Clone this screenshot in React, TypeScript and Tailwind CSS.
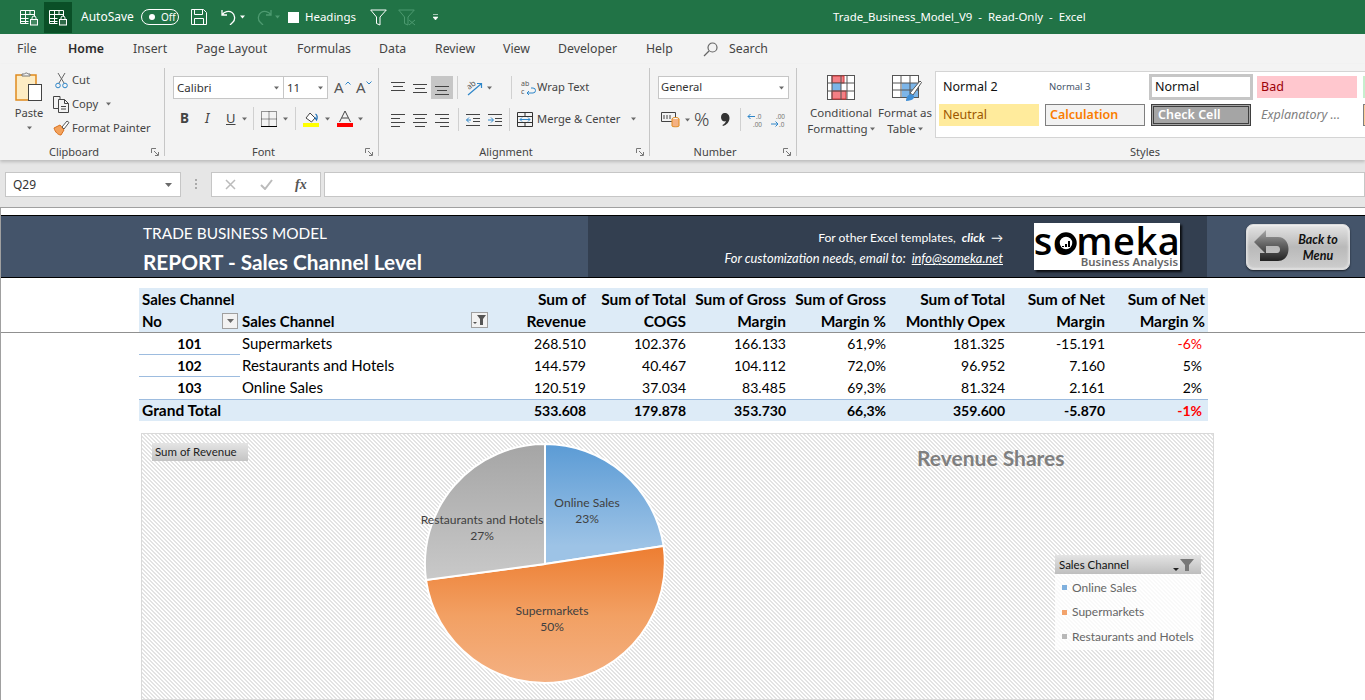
import React from "react";

const Caret = ({ c = "#6a6a6a", className = "" }: { c?: string; className?: string }) => (
  <svg width="7" height="4" viewBox="0 0 7 4" className={"shrink-0 " + className}><path d="M0 0h7L3.500 4z" fill={c} /></svg>
);

const TableLock = () => (
  <svg width="18" height="17" viewBox="0 0 18 17" fill="none" stroke="#fff" strokeWidth="1">
    <path d="M.5 1.500h14M.5 1.500v13h8M.5 5.500h14M.5 9.500h8M.5 12.500h8M5.500 1.500v13M10 1.500v4M14.500 1.500v6" />
    <rect x="10.500" y="10.500" width="7" height="5.500" fill="#fff" fillOpacity=".15" />
    <path d="M12 10.500V9a2 2 0 0 1 4 0v1.500" />
  </svg>
);

const Launcher = () => (
  <svg width="8" height="8" viewBox="0 0 8 8" fill="none" stroke="#777" className="absolute right-[5px] bottom-[4px]">
    <path d="M.5 5V.5H5" /><path d="M3 3l4 4M4 7.500h3.500V4" />
  </svg>
);

const Group = ({ w, label, children }: { w: string; label: string; children: React.ReactNode }) => (
  <div className={"relative flex h-[96px] shrink-0 flex-col " + w}>
    <div className="flex-1">{children}</div>
    <div className="h-[16px] pr-[16px] text-center text-[11px] leading-[16px] text-[#444]">{label}</div>
    <Launcher />
  </div>
);

const Sep = () => <div className="mt-[4px] h-[88px] w-px shrink-0 bg-[#c6c6c6]" />;
const MiniSep = ({ m = "" }: { m?: string }) => <div className={"h-[23px] w-px shrink-0 bg-[#d0d0d0] " + m} />;

const Lines = ({ rows, className = "" }: { rows: [number, number, number][]; className?: string }) => (
  <svg width="14" height="15" viewBox="0 0 14 15" stroke="#444" className={"shrink-0 " + className}>
    {rows.map((r, i) => <path key={i} d={`M${r[0]} ${r[2] + 0.5}h${r[1]}`} />)}
  </svg>
);

const Gallery = ({ className, children }: { className: string; children: React.ReactNode }) => (
  <div className={"flex h-[22px] w-[100px] shrink-0 items-center pl-[4px] " + className}>{children}</div>
);

const head = ["Sum of|Revenue", "Sum of Total|COGS", "Sum of Gross|Margin", "Sum of Gross|Margin %", "Sum of Total|Monthly Opex", "Sum of Net|Margin", "Sum of Net|Margin %"];
const rows = [
  ["101", "Supermarkets", "268.510", "102.376", "166.133", "61,9%", "181.325", "-15.191", "-6%"],
  ["102", "Restaurants and Hotels", "144.579", "40.467", "104.112", "72,0%", "96.952", "7.160", "5%"],
  ["103", "Online Sales", "120.519", "37.034", "83.485", "69,3%", "81.324", "2.161", "2%"],
];
const totals = ["533.608", "179.878", "353.730", "66,3%", "359.600", "-5.870", "-1%"];
const gridCols = "grid w-[1069px] grid-cols-[101px_249px_100px_100px_100px_100px_119px_100px_100px]";

export default function App() {
  return (
    <div className="flex h-[700px] w-[1365px] flex-col overflow-hidden bg-white font-['Noto_Sans',sans-serif] text-[11.200px] text-[#444]">
      {/* Title bar */}
      <div className="flex h-[34px] shrink-0 items-center bg-[#217346] text-white">
        <div className="flex w-[833px] shrink-0 items-center">
          <div className="ml-[20px]"><TableLock /></div>
          <div className="ml-[6px] flex h-[31px] w-[28px] items-center justify-center bg-[#0a4f27]"><TableLock /></div>
          <span className="ml-[9px] text-[12px]">AutoSave</span>
          <div className="ml-[7px] flex h-[16px] w-[38px] items-center rounded-full border border-white pl-[7px]">
            <span className="h-[6px] w-[6px] rounded-full bg-white" />
            <span className="ml-[6px] text-[10px] leading-none">Off</span>
          </div>
          <svg width="16" height="16" viewBox="0 0 16 16" fill="none" stroke="#fff" className="ml-[12px]"><path d="M.5.500h12l3 3v12H.5zM3.500.5v5h8v-5M3.500 15.500v-6h9v6" /></svg>
          <svg width="16" height="16" viewBox="0 0 16 16" fill="none" stroke="#fff" strokeWidth="1.300" className="ml-[14px]"><path d="M1 1v5h5M1.200 6C3 2.500 8 1.500 11 3.500s3.500 7 1 9.500l-3 3" /></svg>
          <Caret c="#fff" className="ml-[3px] w-[5px]" />
          <svg width="16" height="16" viewBox="0 0 16 16" fill="none" stroke="#4d9a70" strokeWidth="1.300" className="ml-[11px]"><path d="M15 1v5h-5M14.800 6C13 2.500 8 1.500 5 3.500s-3.500 7-1 9.500l3 3" /></svg>
          <Caret c="#4d9a70" className="ml-[3px] w-[5px]" />
          <span className="ml-[8px] h-[11px] w-[11px] bg-white" />
          <span className="ml-[6px] text-[11.500px]">Headings</span>
          <svg width="17" height="17" viewBox="0 0 17 17" fill="none" stroke="#fff" className="ml-[14px]"><path d="M.7 1h15.600L10 8v8l-3.500-1.500V8z" /></svg>
          <svg width="18" height="17" viewBox="0 0 18 17" fill="none" stroke="#4d9a70" className="ml-[11px]"><path d="M.7 1h15.600L10 8v8l-3.500-1.500V8zM11 11l6 5M17 11l-6 5" /></svg>
          <svg width="5" height="7" viewBox="0 0 5 7" className="ml-[17px]"><path d="M0 .5h5M0 3h5L2.500 6z" stroke="#fff" strokeWidth=".6" fill="#fff" /></svg>
        </div>
        <div className="whitespace-pre text-[11.400px]">Trade_Business_Model_V9  -  Read-Only  -  Excel</div>
      </div>

      {/* Tabs */}
      <div className="flex h-[30px] shrink-0 items-center bg-[#f3f3f3] text-[12.300px] text-[#444]">
        <span className="ml-[17px] w-[51px]">File</span>
        <span className="relative mr-[27px] w-[38px] font-semibold text-[#2b2b2b]">Home<span className="absolute bottom-[-8px] left-0 h-[2px] w-[38px] bg-[#217346]" /></span>
        <span className="w-[63px]">Insert</span>
        <span className="w-[101px]">Page Layout</span>
        <span className="w-[82px]">Formulas</span>
        <span className="w-[56px]">Data</span>
        <span className="w-[68px]">Review</span>
        <span className="w-[55px]">View</span>
        <span className="w-[88px]">Developer</span>
        <span className="w-[57px]">Help</span>
        <svg width="15" height="15" viewBox="0 0 15 15" fill="none" stroke="#666" strokeWidth="1.200"><circle cx="9.500" cy="5.500" r="4.500" /><path d="M6 9l-5 5" /></svg>
        <span className="ml-[11px]">Search</span>
      </div>

      {/* Ribbon */}
      <div className="relative z-10 flex h-[96px] shrink-0 bg-[#f3f3f3] shadow-[0_2px_3px_rgba(0,0,0,0.18)]">
        <Group w="w-[164px]" label="Clipboard">
          <div className="flex">
            <div className="ml-[15px] flex w-[28px] flex-col items-center">
              <svg width="28" height="31" viewBox="0 0 28 31" className="mt-[7px] shrink-0">
                <rect x="1" y="4" width="20" height="25" fill="#fdecc4" stroke="#e08a1e" strokeWidth="1.500" />
                <path d="M7 5V3h2.500a2 2 0 0 1 3.500 0H15v2z" fill="#f3f3f3" stroke="#777" />
                <rect x="13.500" y="13.500" width="13" height="16" fill="#fff" stroke="#444" />
              </svg>
              <span className="mt-[3px] leading-[16px]">Paste</span>
              <Caret className="mt-[5px] w-[5px]" />
            </div>
            <div className="ml-[10px] mt-[4px] flex flex-col">
              <div className="flex h-[24px] items-center">
                <svg width="17" height="17" viewBox="0 0 17 17" fill="none" className="shrink-0"><path d="M5 1l6 10M12 1L6 11" stroke="#666" /><circle cx="5" cy="13.500" r="2.300" stroke="#2e86c9" /><circle cx="12" cy="13.500" r="2.300" stroke="#2e86c9" /></svg>
                <span className="ml-[2px]">Cut</span>
              </div>
              <div className="flex h-[24px] items-center">
                <svg width="17" height="17" viewBox="0 0 17 17" fill="none" stroke="#444" className="shrink-0"><path d="M7 3.500V.5H.5v12H5" /><path d="M5.500 3.500h6l4 4v9h-10zM11.500 3.500v4h4M8 10.500h5M8 13h5" /></svg>
                <span className="ml-[2px]">Copy</span>
                <Caret className="ml-[8px] w-[5px]" />
              </div>
              <div className="flex h-[24px] items-center">
                <svg width="17" height="16" viewBox="0 0 17 16" className="shrink-0"><path d="M1 8l6-3 4 5-3 5C5 15 2 12 1 8z" fill="#f3a25c" stroke="#d9701d" /><path d="M9 7l5-6 2 1.500-5 6.500z" fill="#fff" stroke="#555" /></svg>
                <span className="ml-[2px] whitespace-nowrap">Format Painter</span>
              </div>
            </div>
          </div>
        </Group>
        <Sep />
        <Group w="w-[213px]" label="Font">
          <div className="pl-[8px] pt-[12px]">
            <div className="flex h-[23px] items-center">
              <div className="flex h-[23px] w-[111px] items-center justify-between border border-[#c6c6c6] bg-white pl-[3px] pr-[4px] text-[11.500px] text-[#333]">Calibri<Caret className="w-[5px]" /></div>
              <div className="flex h-[23px] w-[44px] items-center justify-between border border-l-0 border-[#c6c6c6] bg-white pl-[3px] pr-[4px] text-[11.500px] text-[#333]">11<Caret className="w-[5px]" /></div>
              <span className="relative ml-[6px] w-[20px] text-[15px] leading-none text-[#555]">A<svg width="6" height="4" viewBox="0 0 6 4" fill="none" stroke="#2e86c9" className="absolute left-[11px] top-[1px]"><path d="M.5 3.500L3 1l2.500 2.500" /></svg></span>
              <span className="relative ml-[2px] w-[16px] text-[15px] leading-none text-[#555]">A<svg width="6" height="4" viewBox="0 0 6 4" fill="none" stroke="#2e86c9" className="absolute left-[10px] top-[1px]"><path d="M.5.500L3 3 5.500.5" /></svg></span>
            </div>
            <div className="mt-[8px] flex h-[23px] items-center">
              <span className="ml-[7px] w-[25px] text-[13.500px] font-bold text-[#444]">B</span>
              <span className="w-[20px] text-[13.500px] italic text-[#444]">I</span>
              <span className="ml-[1px] w-[16px] text-[13px] text-[#444] underline">U</span>
              <Caret className="w-[5px]" />
              <MiniSep m="ml-[6px]" />
              <svg width="16" height="16" viewBox="0 0 16 16" fill="none" className="ml-[7px]"><path d="M.5.5h15v15H.5zM8 .5v15M.5 8h15" stroke="#333" strokeWidth="1" strokeDasharray="1 1" /><path d="M0 15.500h16" stroke="#000" /></svg>
              <Caret className="ml-[6px] w-[5px]" />
              <MiniSep m="ml-[7px]" />
              <svg width="16" height="16" viewBox="0 0 16 16" className="ml-[7px]"><path d="M3 7l4-5 5 5-3.500 4z" fill="#fff" stroke="#444" /><path d="M12.500 3c2 1 2 4 1 6l-2-3" fill="none" stroke="#1f6fb5" strokeWidth="1.300" /><rect y="12" width="16" height="4" fill="#ff0" /></svg>
              <Caret className="ml-[6px] w-[5px]" />
              <svg width="16" height="16" viewBox="0 0 16 16" className="ml-[7px]"><path d="M2.500 11L8 0l5.500 11M5 7h6" fill="none" stroke="#444" /><rect y="12" width="16" height="4" fill="#f00" /></svg>
              <Caret className="ml-[5px] w-[5px]" />
            </div>
          </div>
        </Group>
        <Sep />
        <Group w="w-[270px]" label="Alignment">
          <div className="pl-[12px] pt-[12px]">
            <div className="flex h-[23px] items-center">
              <Lines rows={[[0, 14, 2], [2, 10, 6], [0, 14, 10]]} />
              <Lines className="ml-[8px]" rows={[[0, 14, 4], [2, 10, 8], [0, 14, 12]]} />
              <div className="ml-[4px] flex h-[23px] w-[22px] items-center justify-center bg-[#c6c6c6]"><Lines rows={[[0, 14, 6], [2, 10, 10], [0, 14, 14]]} /></div>
              <MiniSep m="ml-[4px]" />
              <svg width="18" height="21" viewBox="0 0 18 21" fill="none" className="ml-[7px] shrink-0"><g transform="rotate(-38 6 9)"><text x="2" y="11" fontSize="8" fill="#555" stroke="none">ab</text></g><path d="M3 18L16 7M12 6.500h4.500V11" stroke="#2e86c9" strokeWidth="1.200" /></svg>
              <Caret className="ml-[4px] w-[5px]" />
              <MiniSep m="ml-[19px]" />
              <div className="ml-[9px] flex items-center">
                <svg width="16" height="17" viewBox="0 0 16 17" fill="none" className="shrink-0"><text x="0" y="7" fontSize="7" fill="#555">ab</text><text x="0" y="15" fontSize="7" fill="#555">c</text><path d="M6 14h6a2.500 2.500 0 0 0 0-5H10M6 14l2-2M6 14l2 2" stroke="#2e86c9" /></svg>
                <span className="whitespace-nowrap">Wrap Text</span>
              </div>
            </div>
            <div className="mt-[9px] flex h-[23px] items-center">
              <Lines rows={[[0, 14, 2], [0, 9, 6], [0, 14, 10], [0, 9, 14]]} />
              <Lines className="ml-[8px]" rows={[[0, 14, 2], [2, 10, 6], [0, 14, 10], [2, 10, 14]]} />
              <Lines className="ml-[8px]" rows={[[0, 14, 2], [5, 9, 6], [0, 14, 10], [5, 9, 14]]} />
              <MiniSep m="ml-[9px]" />
              <svg width="14" height="14" viewBox="0 0 14 14" fill="none" className="ml-[7px]"><path d="M0 1.500h14M7 5.500h7M7 8.500h7M0 12.500h14" stroke="#444" /><path d="M5 7H.5M3 4.500L.5 7 3 9.500" stroke="#2e86c9" /></svg>
              <svg width="14" height="14" viewBox="0 0 14 14" fill="none" className="ml-[8px]"><path d="M0 1.500h14M7 5.500h7M7 8.500h7M0 12.500h14" stroke="#444" /><path d="M0 7h5M3 4.500L5.500 7 3 9.500" stroke="#2e86c9" /></svg>
              <MiniSep m="ml-[7px]" />
              <div className="ml-[7px] flex items-center">
                <svg width="16" height="15" viewBox="0 0 16 15" fill="none" className="shrink-0"><path d="M.5.5h15v14H.5zM.5 4.500h15M.5 10.500h15M8 .5v4M8 10.500v4" stroke="#333" /><path d="M3 7.500h10M5 5.500l-2 2 2 2M11 5.500l2 2-2 2" stroke="#2e86c9" /></svg>
                <span className="ml-[4px] whitespace-nowrap">Merge &amp; Center</span>
                <Caret className="ml-[11px] w-[5px]" />
              </div>
            </div>
          </div>
        </Group>
        <Sep />
        <Group w="w-[146px]" label="Number">
          <div className="pl-[8px] pt-[12px]">
            <div className="flex h-[23px] w-[131px] items-center justify-between border border-[#c6c6c6] bg-white pl-[2px] pr-[4px] text-[11.200px] text-[#333]">General<Caret className="w-[5px]" /></div>
            <div className="mt-[9px] flex h-[23px] items-center">
              <svg width="19" height="17" viewBox="0 0 19 17" fill="none" className="ml-[3px] shrink-0"><path d="M.5 1.500h14v9H.5z" stroke="#444" /><path d="M3 4v4M6 4v4M9 4v4" stroke="#444" /><ellipse cx="14.500" cy="8" rx="3.500" ry="1.500" fill="#fff" stroke="#e08a1e" /><path d="M11 8v7c0 1 7 1 7 0V8" fill="#f4b183" stroke="#e08a1e" /></svg>
              <Caret className="ml-[5px] w-[5px]" />
              <span className="ml-[4px] w-[18px] text-[19px] font-light leading-none text-[#444]">%</span>
              <svg width="9" height="13" viewBox="0 0 9 13" className="ml-[9px] shrink-0"><path d="M3.500 0C6.500 0 8.500 2 8.500 5c0 4-3 7-6.500 8l-.6-1c2-1 3.200-2.300 3.400-4-.5.300-1.100.4-1.600.4C1.500 8.400 0 6.500 0 4.300 0 1.800 1.500 0 3.500 0z" fill="#333" /></svg>
              <MiniSep m="ml-[10px]" />
              <svg width="17" height="16" viewBox="0 0 17 16" fill="none" className="ml-[6px] shrink-0"><path d="M8 4.500H1M3.500 2L1 4.500 3.500 7" stroke="#2e86c9" /><text x="9" y="7" fontSize="6.400" fill="#777">.0</text><text x="6" y="15" fontSize="6.400" fill="#777">.00</text></svg>
              <svg width="17" height="16" viewBox="0 0 17 16" fill="none" className="ml-[6px] shrink-0"><path d="M1 12h7M5.500 9.500L8 12l-2.500 2.500" stroke="#2e86c9" /><text x="9" y="15" fontSize="6.400" fill="#777">.0</text><text x="6" y="7" fontSize="6.400" fill="#777">.00</text></svg>
            </div>
          </div>
        </Group>
        <Sep />
        <div className="relative flex h-[96px] w-[568px] min-w-0 flex-col">
          <div className="flex min-w-0 flex-1 items-start">
            <div className="ml-[10px] flex w-[68px] shrink-0 flex-col items-center pt-[11px]">
              <svg width="28" height="25" viewBox="0 0 28 25" className="shrink-0">
                <rect x=".5" y=".5" width="27" height="24" fill="#fff" stroke="#555" />
                <rect x="5" y="1" width="12" height="7" fill="#f47f85" stroke="#c33" />
                <rect x="5" y="8" width="9" height="8" fill="#7cb5e8" />
                <rect x="5" y="16" width="14" height="8" fill="#f47f85" stroke="#c33" />
                <path d="M5 0v25M14 0v25M20 0v25M0 8h28M0 16h28" stroke="#555" fill="none" />
              </svg>
              <span className="mt-[5px] whitespace-nowrap text-[11.500px] leading-[16px]">Conditional</span>
              <span className="flex items-center whitespace-nowrap text-[11.500px] leading-[15px]">Formatting<Caret className="ml-[2px] w-[5px]" /></span>
            </div>
            <div className="flex w-[60px] shrink-0 flex-col items-center pt-[11px]">
              <svg width="30" height="27" viewBox="0 0 30 27" className="ml-[3px] shrink-0">
                <rect x=".5" y=".5" width="26" height="22" fill="#fff" stroke="#555" />
                <rect x="10" y="8" width="16" height="14" fill="#7cb5e8" />
                <path d="M9 0v23M18 0v23M0 8h27M0 15h27" stroke="#555" fill="none" />
                <path d="M18 18L28 6l1.500 1.500L21 20z" fill="#fff" stroke="#555" />
                <path d="M14 26c0-5 4-8 7-6s0 6-7 6z" fill="#3f8ed5" />
              </svg>
              <span className="mt-[3px] whitespace-nowrap text-[11.500px] leading-[16px]">Format as</span>
              <span className="flex items-center whitespace-nowrap text-[11.500px] leading-[15px]">Table<Caret className="ml-[2px] w-[5px]" /></span>
            </div>
            <div className="mt-[7px] h-[67px] min-w-0 flex-1 overflow-hidden border-y border-l border-[#d4d4d4] bg-white pl-[3px] pt-[2px] text-[12.500px]">
              <div className="flex items-center">
                <Gallery className="text-[#111]">Normal 2</Gallery>
                <Gallery className="ml-[6px] text-[9.500px] text-[#44546a]">Normal 3</Gallery>
                <div className="ml-[4px] flex h-[26px] w-[104px] shrink-0 items-center border-[3px] border-[#c6c6c6] bg-white pl-[3px] text-[#111]">Normal</div>
                <Gallery className="ml-[4px] bg-[#ffc7ce] text-[#9c0006]">Bad</Gallery>
                <Gallery className="ml-[6px] bg-[#c6efce]"><span /></Gallery>
              </div>
              <div className="mt-[4px] flex items-center">
                <Gallery className="bg-[#ffeb9c] text-[#9c5700]">Neutral</Gallery>
                <Gallery className="ml-[6px] border border-[#7f7f7f] bg-[#f2f2f2] font-semibold text-[#fa7d00]">Calculation</Gallery>
                <Gallery className="ml-[6px] border-[3px] border-double border-[#3f3f3f] bg-[#a5a5a5] font-semibold text-white">Check Cell</Gallery>
                <Gallery className="ml-[6px] italic text-[#7f7f7f]">Explanatory ...</Gallery>
                <Gallery className="ml-[6px] border border-[#7f7f7f] bg-[#ffcc99]"><span /></Gallery>
              </div>
            </div>
          </div>
          <div className="h-[16px] pl-[128px] text-center text-[11px] leading-[16px] text-[#444]">Styles</div>
        </div>
      </div>

      {/* Formula bar */}
      <div className="flex h-[47px] shrink-0 items-start bg-[#e6e6e6] pt-[12px]">
        <div className="ml-[5px] flex h-[25px] w-[176px] items-center justify-between border border-[#c6c6c6] bg-white pl-[7px] pr-[8px] text-[12px] text-[#333]">Q29<Caret className="w-[7px]" /></div>
        <svg width="3" height="11" viewBox="0 0 3 11" className="ml-[14px] mt-[7px]" fill="#aaa"><rect width="2" height="2" /><rect y="4" width="2" height="2" /><rect y="8" width="2" height="2" /></svg>
        <div className="ml-[13px] flex h-[25px] w-[110px] items-center border border-[#c6c6c6] bg-white">
          <svg width="11" height="11" viewBox="0 0 11 11" stroke="#bbb" strokeWidth="1.500" className="ml-[13px]"><path d="M1 1l9 9M10 1l-9 9" /></svg>
          <svg width="13" height="11" viewBox="0 0 13 11" stroke="#bbb" strokeWidth="2" fill="none" className="ml-[24px]"><path d="M1 6l4 4 7-9" /></svg>
          <span className="ml-[22px] font-['Liberation_Serif',serif] text-[14px] font-bold italic leading-none text-[#555]">fx</span>
        </div>
        <div className="ml-[3px] h-[25px] flex-1 border border-[#c6c6c6] bg-white" />
      </div>

      {/* Sheet */}
      <div className="flex-1 border-t border-l border-t-[#a0a0a0] border-l-[#a0a0a0] bg-white font-[Lato,sans-serif]">
        <div className="border-b border-[#909090]">
          <div className="mt-[7px] flex h-[63px] border-y border-black text-white">
            <div className="flex w-[587px] flex-col bg-[#44546a] pl-[142px]">
              <div className="mt-[5px] text-[15.400px] leading-[24px]">TRADE BUSINESS MODEL</div>
              <div className="mt-[3px] text-[20.800px] font-bold leading-[28px]">REPORT - Sales Channel Level</div>
            </div>
            <div className="flex w-[619px] bg-[#333f50]">
              <div className="flex w-[415px] flex-col items-end pt-[12px] leading-[20px]">
                <div className="text-[12.100px]">For other Excel templates, &nbsp;<b className="italic">click</b> &nbsp;→</div>
                <div className="text-[12.900px] italic">For customization needs, email to: &nbsp;<span className="underline">info@someka.net</span></div>
              </div>
              <div className="relative ml-[31px] mt-[7px] flex h-[47px] w-[146px] flex-col items-center bg-white text-black shadow-[2px_2px_2px_rgba(0,0,0,0.8)]">
                <div className="h-[31px] font-['Open_Sans',sans-serif] text-[38px] font-semibold leading-[34px] tracking-[0.5px]">someka</div>
                <div className="w-full pr-[2px] text-right font-['Noto_Sans',sans-serif] text-[11.400px] font-semibold leading-[15px] text-[#666]">Business Analysis</div>
                <svg width="22" height="22" viewBox="0 0 22 22" className="absolute left-[21px] top-[9px]"><circle cx="11" cy="11" r="8.500" fill="#fff" stroke="#000" strokeWidth="4.500" /><path d="M7 14h2v1H7zM10 12h2v3h-2zM13 9h2v6h-2z" fill="#000" /></svg>
              </div>
            </div>
            <div className="flex flex-1 bg-[#44546a] pl-[39px] pt-[8px]">
              <div className="flex h-[46px] w-[104px] items-center rounded-[7px] border border-[#dcdcdc] bg-gradient-to-b from-[#e4e4e4] via-[#b9b9b9] to-[#cdcdcd] shadow-[0_1px_2px_rgba(0,0,0,0.6),inset_0_0_3px_rgba(255,255,255,0.9)]">
                <svg width="37" height="36" viewBox="0 0 37 36" className="ml-[6px] shrink-0">
                  <defs><linearGradient id="ar" x1="0" y1="0" x2="0" y2="1"><stop offset="0" stopColor="#a8a8a8" /><stop offset=".45" stopColor="#666" /><stop offset="1" stopColor="#222" /></linearGradient></defs>
                  <path d="M1 13L13 1v7h12c14 0 14 24 0 24H7v-8h17c4 0 4-7 0-7H13v8z" fill="url(#ar)" />
                </svg>
                <div className="ml-[5px] w-[46px] pt-[1px] text-center text-[12.500px] font-bold italic leading-[16px] text-[#111]">Back to<br />Menu</div>
              </div>
            </div>
          </div>
          {/* Pivot header, above the freeze line */}
          <div className={"ml-[138px] mt-[10px] h-[44px] bg-[#ddebf7] text-[15.500px] font-bold leading-[22px] text-black " + gridCols}>
            <div className="pl-[3px] text-[15px]">Sales Channel<div className="relative">No<span className="absolute right-[2px] top-[3px] flex h-[16px] w-[16px] items-center justify-center border border-[#a0a0a0] bg-[#f2f2f2]"><Caret className="w-[7px]" /></span></div></div>
            <div className="relative flex items-end pl-[2px] text-[15px]">Sales Channel<span className="absolute right-[1px] top-[24px] flex h-[16px] w-[17px] items-center justify-center border border-[#a0a0a0] bg-[#f2f2f2]"><svg width="13" height="10" viewBox="0 0 13 10"><path d="M4 0h9L10 4v6H7V4zM0 7h4L2 9z" fill="#555" /></svg></span></div>
            {head.map((h) => (
              <div key={h} className="pr-[3px] text-right">{h.split("|").map((t) => <div key={t}>{t}</div>)}</div>
            ))}
          </div>
        </div>
        {/* Pivot body */}
        <div className={"ml-[138px] text-[14px] leading-[22px] text-black " + gridCols}>
          {rows.map((r, i) => (
            <React.Fragment key={r[0]}>
              <div className={"h-[22px] text-center font-bold " + (i < 2 ? "border-b border-[#9dbcdf]" : "")}>{r[0]}</div>
              <div className="pl-[2px] text-[15px] leading-[21px]">{r[1]}</div>
              {r.slice(2).map((v, j) => (
                <div key={j} className={"text-right " + (j === 6 ? "pr-[6px] " : "pr-[3px] ") + (v === "-6%" ? "text-[#f00]" : "")}>{v}</div>
              ))}
            </React.Fragment>
          ))}
          <div className="col-span-2 border-t border-[#9dbcdf] bg-[#ddebf7] pl-[3px] text-[15.500px] font-bold leading-[21px]">Grand Total</div>
          {totals.map((v, j) => (
            <div key={j} className={"border-t border-[#9dbcdf] bg-[#ddebf7] text-right font-bold leading-[21px] " + (j === 6 ? "pr-[6px] text-[#f00]" : "pr-[3px]")}>{v}</div>
          ))}
        </div>

        {/* Chart */}
        <div className="relative ml-[140px] mt-[12px] h-[267px] w-[1073px] border border-[#d9d9d9] bg-[linear-gradient(45deg,#e3e3e3_25%,#ffffff_25%,#ffffff_50%,#e3e3e3_50%,#e3e3e3_75%,#ffffff_75%)] bg-[length:4px_4px]">
          <svg width="1073" height="267" viewBox="141 433 1073 267" className="absolute left-[-1px] top-[-1px]">
            <defs>
              <linearGradient id="bl" gradientUnits="userSpaceOnUse" x1="0" y1="444" x2="0" y2="546"><stop offset="0" stopColor="#5b9bd5" /><stop offset="1" stopColor="#9dc3e6" /></linearGradient>
              <linearGradient id="or" gradientUnits="userSpaceOnUse" x1="0" y1="546" x2="0" y2="684"><stop offset="0" stopColor="#ed7d31" /><stop offset=".5" stopColor="#f2a063" /><stop offset="1" stopColor="#f4b183" /></linearGradient>
              <linearGradient id="gr" gradientUnits="userSpaceOnUse" x1="0" y1="444" x2="0" y2="580"><stop offset="0" stopColor="#a5a5a5" /><stop offset="1" stopColor="#c9c9c9" /></linearGradient>
            </defs>
            <g stroke="#fff" strokeWidth="2">
              <path d="M545 564L545 444A120 120 0 0 1 663.600 545.900Z" fill="url(#bl)" />
              <path d="M545 564L663.600 545.900A120 120 0 1 1 426 580Z" fill="url(#or)" />
              <path d="M545 564L426 580A120 120 0 0 1 545 444Z" fill="url(#gr)" />
            </g>
            <g fontSize="12.100" fill="#404040" textAnchor="middle" fontFamily="Lato, sans-serif">
              <text x="587" y="507">Online Sales</text><text x="587" y="523">23%</text>
              <text x="482" y="524">Restaurants and Hotels</text><text x="482" y="540">27%</text>
              <text x="552" y="615">Supermarkets</text><text x="552" y="631">50%</text>
            </g>
          </svg>
          <div className="absolute left-[10px] top-[9px] flex h-[18px] w-[96px] items-center bg-gradient-to-b from-[#e4e4e4] to-[#c4c4c4] pl-[3px] text-[11.500px] text-[#222]">Sum of Revenue</div>
          <div className="absolute left-[775px] top-[9px] text-[21px] font-bold leading-[30px] text-[#7f7f7f]">Revenue Shares</div>
          <div className="absolute left-[913px] top-[121px] h-[95px] w-[146px] bg-white/80">
            <div className="flex h-[19px] items-center justify-between bg-gradient-to-b from-[#e4e4e4] to-[#bebebe] pl-[4px] pr-[4px] text-[11.500px] text-[#111]">Sales Channel
              <svg width="24" height="14" viewBox="0 0 24 14"><path d="M0 10h6L3 13z" fill="#222" /><path d="M7 1h14l-5 6v6h-4V7z" fill="#777" /></svg>
            </div>
            {[["Online Sales", "bg-[#7fb0de]"], ["Supermarkets", "bg-[#f2a36c]"], ["Restaurants and Hotels", "bg-[#b8b8b8]"]].map(([t, c]) => (
              <div key={t} className="flex h-[24.500px] items-center pl-[7px] pt-[3px] text-[12px] text-[#666]">
                <span className={"h-[5px] w-[5px] " + c} /><span className="ml-[5px] whitespace-nowrap">{t}</span>
              </div>
            ))}
          </div>
        </div>
      </div>
    </div>
  );
}
